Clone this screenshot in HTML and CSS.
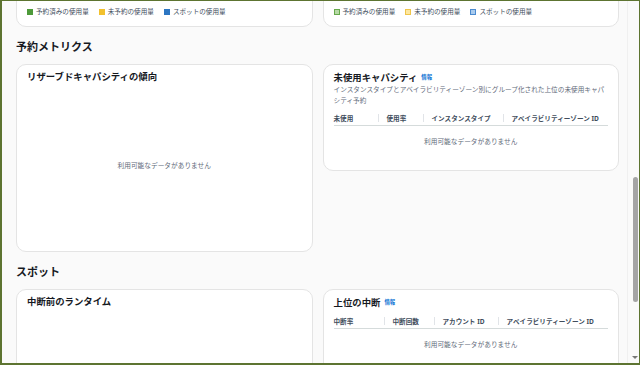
FILE: index.html
```html
<!DOCTYPE html>
<html lang="ja">
<head>
  <meta charset="UTF-8">
  <title>予約メトリクス</title>
  <link rel="stylesheet" href="styles.css">
</head>
<body>
  <div class="window">
    <div class="page">
      <!-- usage cards, scrolled half out of view -->
      <div class="grid top-row">
        <div class="card legend-card">
          <div class="legend">
            <span class="key"><i class="sq green"></i>予約済みの使用量</span>
            <span class="key"><i class="sq yellow"></i>未予約の使用量</span>
            <span class="key"><i class="sq blue"></i>スポットの使用量</span>
          </div>
        </div>
        <div class="card legend-card">
          <div class="legend">
            <span class="key"><i class="sq green light"></i>予約済みの使用量</span>
            <span class="key"><i class="sq yellow light"></i>未予約の使用量</span>
            <span class="key"><i class="sq blue light"></i>スポットの使用量</span>
          </div>
        </div>
      </div>

      <h2 class="section-title">予約メトリクス</h2>
      <div class="grid">
        <div class="card tall">
          <div class="card-title">リザーブドキャパシティの傾向</div>
          <div class="empty chart-empty">利用可能なデータがありません</div>
        </div>
        <div class="card">
          <div class="card-title">未使用キャパシティ <a class="info">情報</a></div>
          <div class="desc">インスタンスタイプとアベイラビリティーゾーン別にグループ化された上位の未使用キャパシティ予約</div>
          <div class="table-head unused">
            <span>未使用</span>
            <span>使用率</span>
            <span>インスタンスタイプ</span>
            <span>アベイラビリティーゾーン ID</span>
          </div>
          <div class="empty table-empty">利用可能なデータがありません</div>
        </div>
      </div>

      <h2 class="section-title">スポット</h2>
      <div class="grid">
        <div class="card tall">
          <div class="card-title">中断前のランタイム</div>
        </div>
        <div class="card tall">
          <div class="card-title">上位の中断 <a class="info">情報</a></div>
          <div class="table-head interrupts">
            <span>中断率</span>
            <span>中断回数</span>
            <span>アカウント ID</span>
            <span>アベイラビリティーゾーン ID</span>
          </div>
          <div class="empty table-empty">利用可能なデータがありません</div>
        </div>
      </div>
    </div>

    <div class="scrollbar">
      <div class="thumb"></div>
      <div class="arrow"></div>
    </div>
  </div>
</body>
</html>
```

FILE: styles.css
```css
html, body {
  margin: 0;
  padding: 0;
  height: 100%;
  overflow: hidden;
  background: #5d7431; /* olive window frame */
  font-family: "Noto Sans", "Noto Sans CJK JP", sans-serif;
  color: #16191f;
}

.window {
  display: flex;
  height: 362px;
  margin: 1px 1px 2px 2px;
  background: #fafafa;
  overflow: hidden;
}

.page {
  flex: 1;
  padding: 0 8px 0 14px;
  overflow: hidden;
}

.grid {
  display: grid;
  grid-template-columns: 1fr 1fr;
  gap: 10px;
  align-items: start;
}

.card {
  box-sizing: border-box;
  background: #fff;
  border: 1px solid #e4e4e4;
  border-radius: 10px;
  padding: 5px 10px 6px;
}

.top-row {
  margin-top: -19px;
}

.legend-card {
  height: 45px;
  padding-top: 24px;
}

.legend {
  display: flex;
  gap: 10px;
  font-size: 6.6px;
  line-height: 10px;
  color: #414d5c;
}

.key {
  display: flex;
  align-items: center;
  gap: 3px;
}

.sq {
  display: inline-block;
  width: 6px;
  height: 6px;
  box-sizing: border-box;
}

.sq.green { background: #4e9a3a; }
.sq.yellow { background: #f2c12e; }
.sq.blue { background: #2d76c2; }

.sq.green.light { background: #b7d9a6; border: 1px solid #67a94c; }
.sq.yellow.light { background: #fde7a0; border: 1px solid #efc54a; }
.sq.blue.light { background: #a9cbee; border: 1px solid #4b8bd0; }

.section-title {
  margin: 12px 0 9px;
  font-size: 11px;
  line-height: 16px;
  font-weight: 700;
}

.card-title {
  font-size: 9.4px;
  line-height: 13px;
  font-weight: 700;
  display: flex;
  align-items: center;
  gap: 4px;
}

.info {
  color: #0972d3;
  font-size: 5.4px;
  font-weight: 700;
  margin-top: 1px;
}

.desc {
  font-size: 6.65px;
  line-height: 11px;
  color: #5f6b7a;
}

.tall {
  height: 188px;
}

.empty {
  font-size: 6.7px;
  line-height: 11px;
  color: #5f6b7a;
  text-align: center;
}

.chart-empty {
  margin-top: 77px;
}

.table-empty {
  padding: 10px 0 17px;
}

.table-head {
  display: flex;
  margin-top: 5px;
  height: 14px;
  align-items: center;
  border-bottom: 1px solid #d5dbdb;
  font-size: 6.6px;
  font-weight: 700;
  color: #414d5c;
}

.table-head span {
  box-sizing: border-box;
  white-space: nowrap;
}

.table-head span + span {
  padding-left: 9px;
  background: linear-gradient(#e1e4e8, #e1e4e8) left center / 1px 8px no-repeat;
}

.unused span:nth-child(1) { width: 44px; }
.unused span:nth-child(2) { width: 45px; }
.unused span:nth-child(3) { width: 80px; }

.interrupts span:nth-child(1) { width: 50px; }
.interrupts span:nth-child(2) { width: 50px; }
.interrupts span:nth-child(3) { width: 64px; }

.scrollbar {
  width: 11px;
  display: flex;
  flex-direction: column;
  align-items: center;
  background: #fafafa;
  border-left: 1px solid #f0f0f0;
}

.thumb {
  width: 5px;
  height: 125px;
  margin: 176px 0 0 3px;
  background: #a5a5a5;
  border-radius: 3px;
}

.arrow {
  margin: auto 0 4px 2px;
  width: 0;
  height: 0;
  border-left: 3px solid transparent;
  border-right: 3px solid transparent;
  border-top: 3px solid #777;
}
```
